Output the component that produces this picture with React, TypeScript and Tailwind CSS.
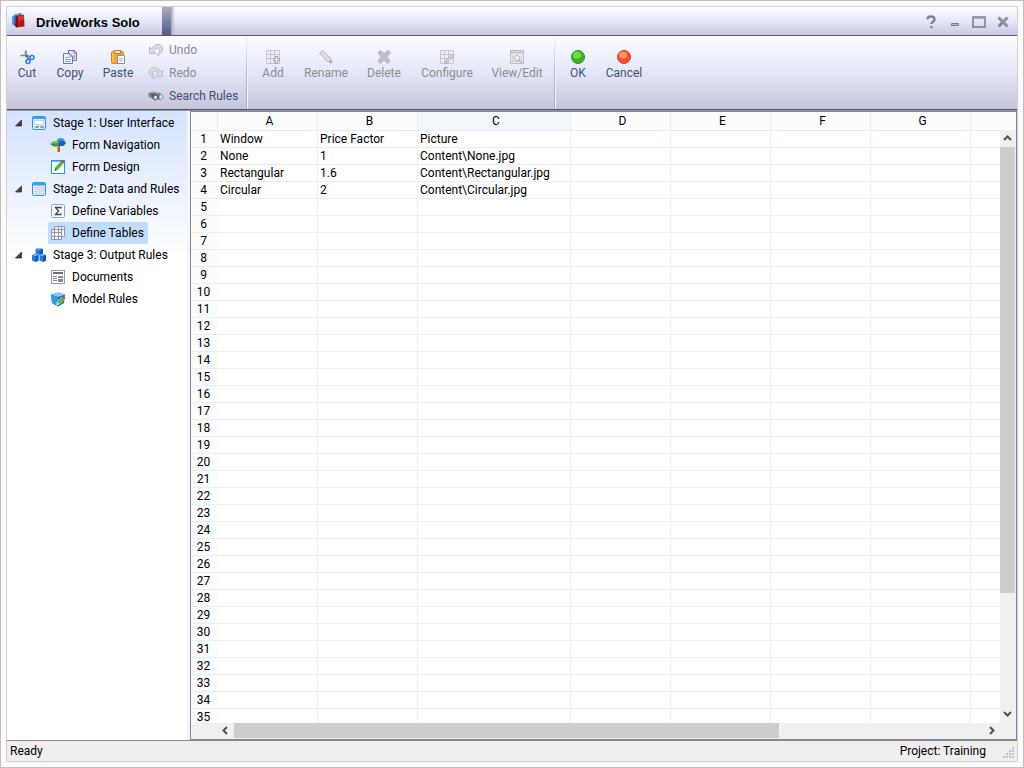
import React, { useState } from 'react';
import clsx from 'clsx';

const COLUMNS = ['A', 'B', 'C', 'D', 'E', 'F', 'G'];
const ROW_COUNT = 35;

const TABLE_DATA: string[][] = [
  ['Window', 'Price Factor', 'Picture'],
  ['None', '1', 'Content\\None.jpg'],
  ['Rectangular', '1.6', 'Content\\Rectangular.jpg'],
  ['Circular', '2', 'Content\\Circular.jpg'],
];

type IconProps = { children: React.ReactNode; className?: string };

const Icon: React.FC<IconProps> = ({ children, className }) => (
  <svg className={clsx('w-4 h-4 shrink-0', className)} viewBox="0 0 16 16" fill="none" aria-hidden="true">
    {children}
  </svg>
);

const LogoIcon = () => (
  <Icon>
    <path d="M1 4 4 1.500 10.500 0v4L5 6 4 13l-3-2Z" fill="#2a63bd" />
    <path d="M1 4 4 1.500 10.500 0 9.500 1.500 4 3 3 5v7l-2-1Z" fill="#5f97e3" />
    <path d="m6 3 7-1.500.5 12L5 14.500Z" fill="#b3191c" />
    <path d="m6 3-1 1.500-1 8 1 2 1.500-.5L7 3Z" fill="#720d14" />
    <path d="m7 3.500 5.500-1 .3 4L7 8Z" fill="#d63a36" />
  </Icon>
);

const CutIcon = () => (
  <Icon>
    <path d="M7 1.500V8M1.500 6.500H9" stroke="#7c8288" strokeWidth="1.600" />
    <path d="M5.500 2.500V6" stroke="#c4c8cc" />
    <path d="M7 7 10 10M7 7h3" stroke="#4c6f9c" strokeWidth="1.500" />
    <circle cx="13" cy="8.500" r="2" stroke="#2d7dde" strokeWidth="1.600" />
    <circle cx="9" cy="12.500" r="2" stroke="#2d7dde" strokeWidth="1.600" />
  </Icon>
);

const CopyIcon = () => (
  <Icon>
    <path d="M6.500 1.500h6l2 2v8h-8Z" fill="#e4e0f3" stroke="#756eaa" />
    <path d="M12 1.500V4h2.500M12 6v4" stroke="#756eaa" />
    <path d="M1.500 4.500h6l3 3v7h-9Z" fill="#f1f5fc" stroke="#667da6" />
    <path d="M7.500 4.500v3h3M3 8.500h4M3 10.500h6M3 12.500h6" stroke="#8da2c4" />
  </Icon>
);

const PasteIcon = () => (
  <Icon>
    <rect x="1.500" y="2.500" width="12" height="12" rx="1" fill="#f7a531" stroke="#df8215" />
    <path d="M3 4v9" stroke="#ffd27e" />
    <rect x="4.500" y="1.500" width="6" height="3" fill="#f7e0b5" stroke="#b68342" />
    <path d="M7.500 6.500h7v8h-7Z" fill="#fafafe" stroke="#8d8cab" />
    <path d="M9 9.500h4M9 11.500h4" stroke="#b2b3cb" />
  </Icon>
);

const UndoIcon = ({ className }: { className?: string }) => (
  <Icon className={className}>
    <path
      d="M1.500 5v6.500H8L5.500 9C7 6 10.500 5 11.500 7.500c.7 2-1 4-2.500 6.500 4-2 6.500-5 5.500-8.500C13 1.500 6.500 1 3.500 7Z"
      fill="#dddde2"
      stroke="#b9bac2"
    />
  </Icon>
);

const BinocularsIcon = () => (
  <Icon>
    <path d="M1 5 5 3.500 12 5l3 4-3 3-3-1-3 1-3-3Z" fill="#62666d" />
    <path d="m3 5 3-1 5 2" stroke="#c1c5ca" />
    <ellipse cx="7.500" cy="9.500" rx="2" ry="2.500" fill="#cce8f5" stroke="#4d565e" />
    <ellipse cx="13" cy="9" rx="2" ry="2.500" fill="#d5ecf7" stroke="#8b969c" />
    <path d="M1 5v3l3 2" stroke="#898d93" strokeWidth="1.500" />
  </Icon>
);

const GrayGrid = () => (
  <path d="M1.500 1.500h13v13h-13ZM1.500 5.500h13M1.500 9.500h13M5.500 1.500v13M9.500 1.500v13" fill="#eeeef4" stroke="#c4c4ce" />
);

const AddIcon = () => (
  <Icon>
    <GrayGrid />
    <path d="M10.500 7.500h2v2h2v2h-2v3h-2v-3h-2v-2h2Z" fill="#f1f1f5" stroke="#a3a3ad" />
  </Icon>
);

const RenameIcon = () => (
  <Icon>
    <path d="M1.500 4 4.500 1.500l8.500 8 1 4.500-4.500-1.500Z" fill="#d4d4db" stroke="#bbbbc4" />
    <path d="m3.500 3.500 7.500 7.500" stroke="#f3f3f7" />
    <path d="m11 13 3 1-1-3Z" fill="#9999a4" />
  </Icon>
);

const DeleteIcon = () => (
  <Icon>
    <path
      d="m2 3.500 3-2 3 3.500 4-3.500 2.500 2L11 8l3 4-2.500 2.500L8 11l-3.500 3.500L2 12l3-4Z"
      fill="#bfbfc8"
      stroke="#b2b2bb"
    />
  </Icon>
);

const ConfigureIcon = () => (
  <Icon>
    <GrayGrid />
    <path d="m6.500 14 1-3 6-6 1.500 1.500-6 6Z" fill="#dedee5" stroke="#ababb5" />
  </Icon>
);

const ViewEditIcon = () => (
  <Icon>
    <rect x="1.500" y="1.500" width="13" height="13" fill="#eaeaf0" stroke="#bcbcc6" />
    <path d="M2 3.500h12" stroke="#c4c4cd" strokeWidth="2" />
    <path d="M3.500 6.500v6h9v-6" stroke="#cdcdd6" />
    <circle cx="8" cy="9" r="2.500" fill="#f6f6fa" stroke="#b0b0ba" />
    <path d="m10 11 2.500 2.500" stroke="#b0b0ba" strokeWidth="1.500" />
  </Icon>
);

const OkIcon = () => (
  <Icon>
    <circle cx="8" cy="8" r="6.500" fill="#3cb521" stroke="#2d9421" />
    <ellipse cx="7" cy="6" rx="4" ry="3.500" fill="#70dc48" />
  </Icon>
);

const CancelIcon = () => (
  <Icon>
    <circle cx="8" cy="8" r="6.500" fill="#f65229" stroke="#d63c20" />
    <ellipse cx="7" cy="6" rx="4" ry="3.500" fill="#ff9069" />
  </Icon>
);

const FormIcon = () => (
  <Icon>
    <rect x="1.500" y="1.500" width="13" height="13" rx="1" fill="#dcebf9" stroke="#2c94ea" />
    <path d="M2 3h12" stroke="#3ba2f2" strokeWidth="2" />
    <path d="M3.500 5.500h9v4h-9Z" fill="#fff" stroke="#c4d3e2" />
    <path d="M4.500 11.500h3v1h-3ZM9.500 11.500h3v1h-3Z" stroke="#8a9aa9" />
  </Icon>
);

const SignpostIcon = () => (
  <Icon>
    <path d="M7 5h3v10H7Z" fill="#a86a28" />
    <path d="M7 3 9 1.500h4L16 6l-2.500 3H9L6.500 6Z" fill="#1762b8" />
    <path d="M9 1.500h4l1.500 2.500H7Z" fill="#3d91df" />
    <path d="M0 7 3.500 4H8l1 2-1 3.500H3.500Z" fill="#36992e" />
    <path d="m0 7 3.500-3H8l.5 2Z" fill="#74c75f" />
    <path d="M7.500 9v6" stroke="#dda25b" />
  </Icon>
);

const DesignIcon = () => (
  <Icon>
    <rect x="1.500" y="1.500" width="13" height="13" fill="#fafdff" stroke="#2c94ea" />
    <path d="M2 2.500h12" stroke="#69b9f5" />
    <path d="m5 11 .7-2.500L11 2.500l2 2-5.500 6Z" fill="#58bd3e" stroke="#34892b" strokeWidth=".7" />
    <path d="m11 2.500 1.500-1.500 2.500 1.500-2 2Z" fill="#dc3f33" />
    <path d="m4.500 12 .8-2.500L7 11Z" fill="#5f5243" />
  </Icon>
);

const DataIcon = () => (
  <Icon>
    <rect x="1.500" y="1.500" width="13" height="13" rx="1" fill="#f4f5fb" />
    <path d="M2 6.500h12M2 8.500h12M2 10.500h12M2 12.500h12M4.500 4v10M6.500 4v10M8.500 4v10M10.500 4v10M12.500 4v10" stroke="#d3d4e6" />
    <rect x="1.500" y="1.500" width="13" height="13" rx="1" stroke="#2c94ea" />
    <path d="M2 3h12" stroke="#3ba2f2" strokeWidth="3" />
  </Icon>
);

const SigmaIcon = () => (
  <Icon>
    <rect x="1.500" y="1.500" width="13" height="13" rx="1" fill="#f8f9fd" stroke="#93a2cd" />
    <path d="M11 5.500V4.500H5.500L8.500 8l-3 3.500H11v-1" stroke="#3f434d" strokeWidth="1.300" />
  </Icon>
);

const TablesIcon = () => (
  <Icon>
    <path d="M4.500 1.500h10v10h-10ZM8.500 1.500v10M11.500 1.500v10M4 4.500h10" fill="#f4f4f7" stroke="#9797a8" />
    <path d="M1.500 4.500h10v10h-10ZM1.500 7.500h10M1.500 11.500h10M4.500 4.500v10M8.500 4.500v10" fill="#f6f6fa" stroke="#9595a6" />
  </Icon>
);

const CubesIcon = () => (
  <Icon>
    <path d="M4.500 2 8 1l4 1v4.500L8 8 4.500 7Z" fill="#2a7ce0" />
    <path d="M4.500 2 8 1l4 1-3.500 1Z" fill="#7cb8f8" />
    <path d="M8.500 3v5L12 6.500V2Z" fill="#1456b5" />
    <path d="M1 8 4 7l3.500 1v5.500L4.500 15 1 13.500Z" fill="#2a7ce0" />
    <path d="m1 8 3-1 3.500 1-3 1Z" fill="#7cb8f8" />
    <path d="M4.500 9v6l3-1.500V8Z" fill="#1456b5" />
    <path d="m8.500 8 3-1L15 8v5.500L12 15l-3.500-1.500Z" fill="#2a7ce0" />
    <path d="m8.500 8 3-1L15 8l-3 1Z" fill="#7cb8f8" />
    <path d="M12 9v6l3-1.500V8Z" fill="#1456b5" />
  </Icon>
);

const DocumentIcon = () => (
  <Icon>
    <rect x="1.500" y="1.500" width="13" height="13" fill="#fdfdff" stroke="#9199bd" />
    <path d="M3 4h10" stroke="#6d6d70" strokeWidth="2" />
    <path d="M3 7.500h4M3 9.500h4M3 11.500h4" stroke="#88888c" />
    <path d="M8 7h5v2H8ZM8 10h5v3H8Z" fill="#88888c" />
  </Icon>
);

const ModelIcon = () => (
  <Icon>
    <path d="m1 3.500 7-2 7 2-1 8.500-6 3.500L2 12Z" fill="#1c6fc4" />
    <path d="m1 3.500 7-2 7 2L8 6Z" fill="#8bcaf5" />
    <path d="M1 3.500 8 6v9.500L2 12Z" fill="#2f9be6" />
    <path d="m6.500 14 1-3.500L12 6l2.500 2-5 5Z" fill="#59b738" stroke="#e7f5df" strokeWidth=".6" />
    <path d="M12 6.500 13.500 5l2 2-1.500 1.500Z" fill="#dc3f33" />
    <path d="m6.500 14 .7-2.500L9 13Z" fill="#f4dca4" />
  </Icon>
);

type ToolButtonProps = {
  label: string;
  icon: React.ReactNode;
  width: string;
  disabled?: boolean;
};

const ToolButton: React.FC<ToolButtonProps> = ({ label, icon, width, disabled }) => (
  <button
    type="button"
    disabled={disabled}
    className={clsx(
      'flex flex-col items-center shrink-0 pt-[13px] leading-4 whitespace-nowrap',
      width,
      disabled ? 'text-[#8b8b93]' : 'text-[#454e73]'
    )}
  >
    {icon}
    {label}
  </button>
);

const SmallButton: React.FC<Omit<ToolButtonProps, 'width'>> = ({ label, icon, disabled }) => (
  <button
    type="button"
    disabled={disabled}
    className={clsx(
      'flex items-center gap-[5px] h-[23px] whitespace-nowrap',
      disabled ? 'text-[#8b8b93]' : 'text-[#454e73]'
    )}
  >
    {icon}
    {label}
  </button>
);

const Separator = () => (
  <div className="w-0.5 shrink-0 border-r border-[#f4f5fd] bg-linear-to-b from-[#f4f4fa] via-[#b5b8ca] to-[#a9acc2]" />
);

const Toolbar = () => (
  <div className="flex h-[75px] shrink-0 border-b border-[#9295a6] bg-[#4c5165] pb-px">
    <div className="flex grow bg-linear-to-b from-[#fdfdff] via-[#e4e7f8] to-[#c4c5dc]">
      <ToolButton label="Cut" icon={<CutIcon />} width="w-10" />
      <ToolButton label="Copy" icon={<CopyIcon />} width="w-[46px]" />
      <ToolButton label="Paste" icon={<PasteIcon />} width="w-[50px]" />
      <div className="flex flex-col w-[103px] shrink-0 pl-[5px] pt-[2px]">
        <SmallButton label="Undo" icon={<UndoIcon />} disabled />
        <SmallButton label="Redo" icon={<UndoIcon className="-scale-x-100" />} disabled />
        <SmallButton label="Search Rules" icon={<BinocularsIcon />} />
      </div>
      <Separator />
      <div className="flex px-1">
        <ToolButton label="Add" icon={<AddIcon />} width="w-[42px]" disabled />
        <ToolButton label="Rename" icon={<RenameIcon />} width="w-16" disabled />
        <ToolButton label="Delete" icon={<DeleteIcon />} width="w-[52px]" disabled />
        <ToolButton label="Configure" icon={<ConfigureIcon />} width="w-[74px]" disabled />
        <ToolButton label="View/Edit" icon={<ViewEditIcon />} width="w-[66px]" disabled />
      </div>
      <Separator />
      <div className="flex px-0.5">
        <ToolButton label="OK" icon={<OkIcon />} width="w-10" />
        <ToolButton label="Cancel" icon={<CancelIcon />} width="w-[52px]" />
      </div>
    </div>
  </div>
);

const WindowButton: React.FC<{ label: string; children: React.ReactNode }> = ({ label, children }) => (
  <button type="button" aria-label={label} className="flex items-center justify-center w-6 h-7">
    <Icon>{children}</Icon>
  </button>
);

const TitleBar = () => (
  <header className="flex h-[29px] shrink-0 border-b border-[#5a5d70] bg-linear-to-b from-[#fdfdff] via-[#e6e8f7] to-[#c8c9e2]">
    <div className="flex items-center w-[155px] gap-[9px] pl-1 shrink-0">
      <LogoIcon />
      <h1 className="pt-1 font-['Liberation_Sans',Arial,sans-serif] text-[13px] font-bold text-black whitespace-nowrap">
        DriveWorks Solo
      </h1>
    </div>
    <div className="w-[9px] shrink-0 bg-linear-to-b from-[#aaacc2] to-[#56588a]" />
    <div className="w-1 shrink-0 bg-linear-to-r from-[#a6a8bd] to-transparent" />
    <div className="flex ml-auto pr-0.5 pt-px">
      <WindowButton label="Help">
        <path d="M4.500 5.500C4.500 3 6 2.500 8 2.500c2.500 0 3.500 1 3.500 3C11.500 8 8.500 7.500 8.500 10M8.500 12v2.200" stroke="#7e7f99" strokeWidth="2.400" />
      </WindowButton>
      <WindowButton label="Minimize">
        <path d="M4.500 9.500h7v2h-7Z" fill="#b7b8ca" stroke="#777892" />
      </WindowButton>
      <WindowButton label="Maximize">
        <path d="M2 3h12v10H2Z" stroke="#777892" strokeWidth="1.500" />
        <path d="M2 3.500h12" stroke="#9698b0" strokeWidth="2.500" />
      </WindowButton>
      <WindowButton label="Close">
        <path d="m3.500 3.500 9 9M12.500 3.500l-9 9" stroke="#7e7f99" strokeWidth="2.800" />
        <path d="m3.500 3 9 9M12.500 3l-4 4" stroke="#b5b6ca" strokeWidth=".8" />
      </WindowButton>
    </div>
  </header>
);

type Stage = { label: string; icon: React.ReactNode; items: { label: string; icon: React.ReactNode }[] };

const STAGES: Stage[] = [
  {
    label: 'Stage 1: User Interface',
    icon: <FormIcon />,
    items: [
      { label: 'Form Navigation', icon: <SignpostIcon /> },
      { label: 'Form Design', icon: <DesignIcon /> },
    ],
  },
  {
    label: 'Stage 2: Data and Rules',
    icon: <DataIcon />,
    items: [
      { label: 'Define Variables', icon: <SigmaIcon /> },
      { label: 'Define Tables', icon: <TablesIcon /> },
    ],
  },
  {
    label: 'Stage 3: Output Rules',
    icon: <CubesIcon />,
    items: [
      { label: 'Documents', icon: <DocumentIcon /> },
      { label: 'Model Rules', icon: <ModelIcon /> },
    ],
  },
];

const Sidebar = () => {
  const [selected, setSelected] = useState('Define Tables');

  return (
    <nav className="w-[180px] shrink-0 overflow-hidden bg-white bg-linear-to-b from-[#d5e3ff] to-white to-[150px] pt-px">
      {STAGES.map(stage => (
        <div key={stage.label}>
          <button type="button" className="flex items-center h-[22px] pl-2 text-black whitespace-nowrap">
            <svg className="w-2 h-2 mr-2" viewBox="0 0 8 8" aria-hidden="true">
              <path d="M6.500 1v6h-6Z" fill="#404040" stroke="#262626" strokeWidth=".7" />
            </svg>
            {stage.icon}
            <span className="pl-1.5">{stage.label}</span>
          </button>
          {stage.items.map(item => (
            <button
              key={item.label}
              type="button"
              onClick={() => setSelected(item.label)}
              className={clsx(
                'flex items-center h-[22px] ml-[41px] pl-0.5 pr-1 gap-[6px] rounded-xs text-black whitespace-nowrap',
                selected === item.label && 'bg-[#c2dcfd]'
              )}
            >
              {item.icon}
              {item.label}
            </button>
          ))}
        </div>
      ))}
    </nav>
  );
};

const CHEVRONS = {
  up: 'm1 6 3.500-3.500L8 6',
  down: 'm1 2 3.500 3.500L8 2',
  left: 'M6 1 2.500 4.500 6 8',
  right: 'm3 1 3.500 3.500L3 8',
};

const ScrollButton: React.FC<{ direction: keyof typeof CHEVRONS }> = ({ direction }) => (
  <button type="button" aria-label={`Scroll ${direction}`} className="flex items-center justify-center w-4 h-4 shrink-0 pr-px pb-px">
    <svg className="w-[9px] h-[9px]" viewBox="0 0 9 9" fill="none" aria-hidden="true">
      <path d={CHEVRONS[direction]} stroke="#505050" strokeWidth="2" />
    </svg>
  </button>
);

const DataGrid = () => (
  <main className="flex flex-col grow min-w-0 ml-[3px] border border-[#82869a] bg-white">
    <div className="flex grow min-h-0">
      <div className="grow min-w-0 overflow-hidden">
        <table className="w-full table-fixed border-separate border-spacing-0">
          <colgroup>
            <col className="w-[27px]" />
            <col className="w-[100px]" />
            <col className="w-[100px]" />
            <col className="w-[153px]" />
            <col className="w-[100px]" />
            <col className="w-[100px]" />
            <col className="w-[100px]" />
            <col className="w-[100px]" />
            <col />
          </colgroup>
          <thead>
            <tr className="h-[19px]">
              <td className="border-b border-r border-[#e3effb] bg-[#fcfcfc]" />
              {COLUMNS.map(column => (
                <th
                  key={column}
                  scope="col"
                  className={clsx(
                    'border-b border-r border-[#e3effb] p-0 pl-1 text-center font-normal leading-4',
                    column === 'C' ? 'bg-[#f3f7fc]' : 'bg-[#fcfcfc]'
                  )}
                >
                  {column}
                </th>
              ))}
              <td className="border-b border-[#e3effb] bg-[#fcfcfc]" />
            </tr>
          </thead>
          <tbody>
            {Array.from({ length: ROW_COUNT }, (_, row) => (
              <tr key={row} className="h-[17px]">
                <th scope="row" className="border-b border-[#e3effb] bg-[#fcfcfc] p-0 pr-0.5 text-center font-normal leading-3">
                  {row + 1}
                </th>
                {COLUMNS.map((column, index) => (
                  <td key={column} className="border-b border-r border-[#efefef] p-0 pl-0.5 leading-3 whitespace-nowrap">
                    {TABLE_DATA[row]?.[index]}
                  </td>
                ))}
                <td className="border-b border-[#efefef] p-0" />
              </tr>
            ))}
          </tbody>
        </table>
      </div>
      <div className="flex flex-col w-4 shrink-0">
        <div className="h-[19px] shrink-0 border-b border-[#e3effb] bg-[#fcfcfc]" />
        <div className="flex flex-col grow bg-[#f0f0f0]">
          <ScrollButton direction="up" />
          <div className="flex-39 mr-px bg-[#cdcdcd]" />
          <div className="flex-10" />
          <ScrollButton direction="down" />
        </div>
      </div>
    </div>
    <div className="flex h-4 shrink-0 bg-[#f0f0f0] pl-[27px] pr-4">
      <ScrollButton direction="left" />
      <div className="flex-8 mb-px bg-[#cdcdcd]" />
      <div className="flex-3" />
      <ScrollButton direction="right" />
    </div>
  </main>
);

const StatusBar = () => (
  <footer className="flex items-center h-[21px] shrink-0 border-t border-[#85878c] bg-[#f0edec] pl-[3px] text-black">
    <span>Ready</span>
    <span className="ml-auto mr-[17px]">Project: Training</span>
    <svg className="w-3 h-3 mr-0.5 mt-1" viewBox="0 0 12 12" fill="#bcc1d0" aria-hidden="true">
      <path d="M9 0h2v2H9ZM6 3h2v2H6ZM9 3h2v2H9ZM3 6h2v2H3ZM6 6h2v2H6ZM9 6h2v2H9ZM0 9h2v2H0ZM3 9h2v2H3ZM6 9h2v2H6ZM9 9h2v2H9Z" />
    </svg>
  </footer>
);

const App: React.FC = () => {
  return (
    <div className="h-screen border border-[#bfbfbf] bg-[#fbfbfb] p-[5px] font-[Roboto,'Open_Sans',sans-serif] text-[12px] leading-4 text-black">
      <div className="flex flex-col h-full overflow-hidden border border-[#cfcfcf] bg-[#f0f0f0]">
        <TitleBar />
        <Toolbar />
        <div className="flex grow min-h-0 bg-[#f3f5f9]">
          <Sidebar />
          <DataGrid />
        </div>
        <StatusBar />
      </div>
    </div>
  );
};

export default App;
